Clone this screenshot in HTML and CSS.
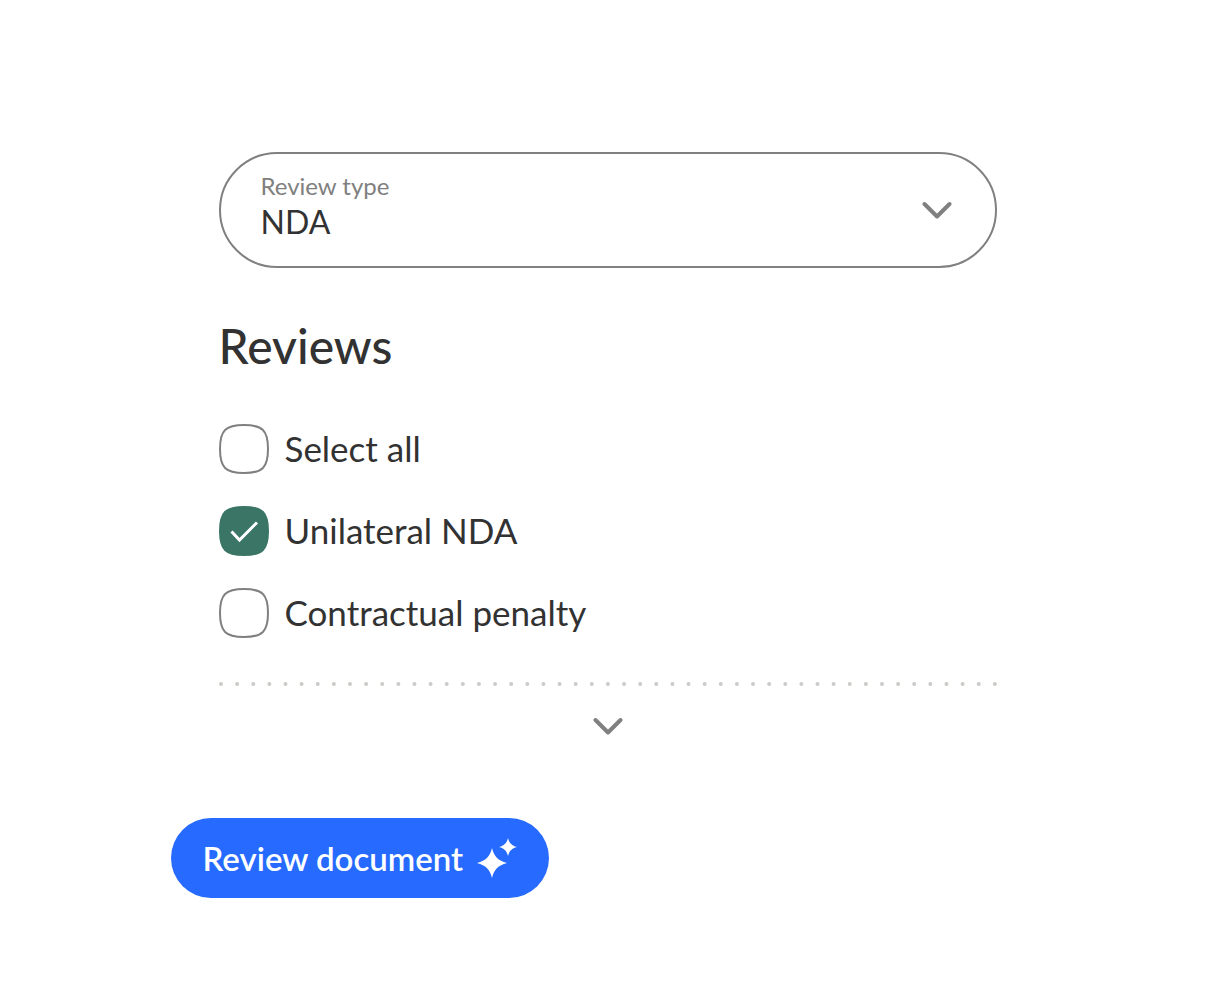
FILE: index.html
```html
<!DOCTYPE html>
<html lang="en">
<head>
    <meta charset="UTF-8">
    <meta name="viewport" content="width=device-width, initial-scale=1.0">
    <title>Review document</title>
    <link rel="stylesheet" href="styles.css">
</head>
<body>
    <svg class="sprite" aria-hidden="true">
        <symbol id="chevron" viewBox="0 0 30 18">
            <path d="M2.5 3L15 15.5L27.5 3" fill="none" stroke="currentColor" stroke-width="4" stroke-linecap="round" stroke-linejoin="round"/>
        </symbol>
        <symbol id="tick-box" viewBox="0 0 50 50">
            <path class="box" d="M25 1C43.5 1 49 6.5 49 25S43.5 49 25 49S1 43.5 1 25S6.5 1 25 1Z"/>
            <path class="tick" d="M12.5 25.5L20.5 34L38 16.5"/>
        </symbol>
    </svg>

    <form class="container">
        <div class="options">
            <div class="select-group">
                <label for="review-type">Review type</label>
                <select id="review-type">
                    <option>NDA</option>
                </select>
                <svg class="chevron" aria-hidden="true"><use href="#chevron"/></svg>
            </div>

            <h2>Reviews</h2>

            <div class="check-list">
                <label class="check">
                    <input type="checkbox">
                    <svg aria-hidden="true"><use href="#tick-box"/></svg>
                    <span>Select all</span>
                </label>
                <label class="check">
                    <input type="checkbox" checked>
                    <svg aria-hidden="true"><use href="#tick-box"/></svg>
                    <span>Unilateral NDA</span>
                </label>
                <label class="check">
                    <input type="checkbox">
                    <svg aria-hidden="true"><use href="#tick-box"/></svg>
                    <span>Contractual penalty</span>
                </label>
            </div>

            <!-- the dots spread evenly over the full width -->
            <svg class="dots" aria-hidden="true">
                <line x1="0" y1="2" x2="100%" y2="2" pathLength="48.01"/>
            </svg>
            <button type="button" class="more" aria-label="Show more">
                <svg class="chevron" aria-hidden="true"><use href="#chevron"/></svg>
            </button>
        </div>

        <button type="button" class="button">
            Review document
            <svg class="sparkle" viewBox="0 0 40 40" aria-hidden="true">
                <path d="M15 10C17 18.5 21 22.5 30 25C21 27.5 17 31.5 15 40C13 31.5 9 27.5 0 25C9 22.5 13 18.5 15 10Z"/>
                <path d="M31 0C32.2 5.1 34.6 7.5 40 9C34.6 10.5 32.2 12.9 31 18C29.8 12.9 27.4 10.5 22 9C27.4 7.5 29.8 5.1 31 0Z"/>
            </svg>
        </button>
    </form>
</body>
</html>
```

FILE: styles.css
```css
* {
    box-sizing: border-box;
}
body {
    font-family: Lato, sans-serif;
    margin: 0;
    background-color: #fff;
    color: #323232;
}
.sprite {
    display: none;
}
.container {
    max-width: 874px;
    margin: 0 auto;
    padding: 152px 0 100px;
}
.options {
    padding: 0 48px;
}

/* label, select and arrow share one grid cell */
.select-group {
    display: grid;
    align-items: center;
}
.select-group > * {
    grid-area: 1 / 1;
}
.select-group label {
    z-index: 1;
    align-self: start;
    justify-self: start;
    padding: 20px 0 0 42px;
    font-size: 24px;
    line-height: 28px;
    color: #808080;
    pointer-events: none;
}
.select-group select {
    width: 100%;
    height: 116px;
    padding: 22px 40px 0;
    border: 2px solid #808080;
    border-radius: 58px;
    background: none;
    appearance: none;
    font-family: inherit;
    font-size: 32px;
    color: inherit;
}
.select-group .chevron {
    justify-self: end;
    margin-right: 45px;
    pointer-events: none;
}
.chevron {
    display: block;
    width: 30px;
    height: 18px;
    color: #808080;
}

h2 {
    margin: 48px 0;
    font-size: 48px;
    font-weight: 500;
    line-height: 60px;
}

.check-list {
    display: flex;
    flex-direction: column;
    align-items: flex-start;
    gap: 32px;
}
.check {
    display: grid;
    grid-template-columns: 50px auto;
    column-gap: 16px;
    font-size: 35px;
    line-height: 48px;
    cursor: pointer;
}
.check input,
.check svg {
    grid-area: 1 / 1;
    width: 50px;
    height: 50px;
    margin: 0;
}
.check input {
    appearance: none;
}
.check svg {
    pointer-events: none;
    fill: none;
    stroke: #808080;
    stroke-width: 2px;
    color: transparent;
}
.check input:checked + svg {
    fill: #3a7565;
    stroke: #3a7565;
    color: #fff;
}
.tick {
    fill: none;
    stroke: currentColor;
    stroke-width: 3px;
}

.dots {
    display: block;
    width: calc(100% - 4px);
    height: 4px;
    margin: 44px 2px 0;
    overflow: visible;
}
.dots line {
    stroke: #cbcbc8;
    stroke-width: 4px;
    stroke-linecap: round;
    stroke-dasharray: 0 1;
}
.more {
    display: flex;
    justify-content: center;
    width: 100%;
    padding: 31px 0;
    border: none;
    background: none;
    cursor: pointer;
}

.button {
    display: inline-flex;
    align-items: center;
    gap: 14px;
    height: 80px;
    margin-top: 52px;
    padding: 0 32px;
    border: none;
    border-radius: 40px;
    background-color: #266aff;
    color: #fff;
    font-family: inherit;
    font-size: 33px;
    font-weight: 600;
    cursor: pointer;
}
.button:hover {
    background-color: #1b5cea;
}
.sparkle {
    width: 40px;
    height: 40px;
    fill: #fff;
}
```
